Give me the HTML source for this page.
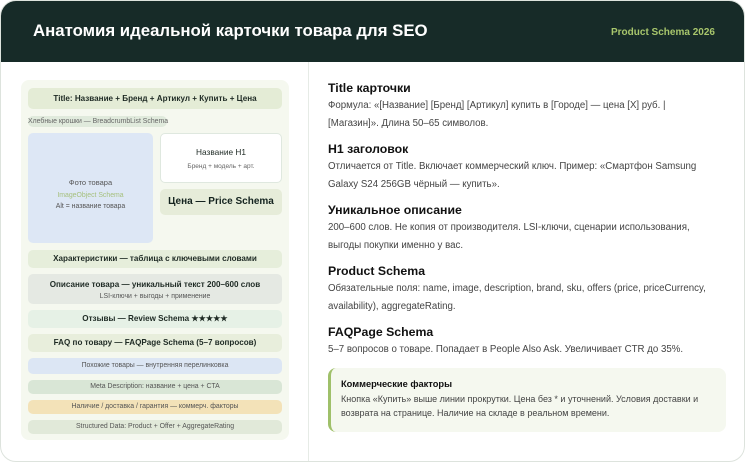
<!DOCTYPE html>
<html><head><meta charset="utf-8"><style>
*{margin:0;padding:0;box-sizing:border-box}
body{width:745px;height:462px;background:#fff;font-family:"Liberation Sans",Arial,sans-serif;position:relative;overflow:hidden}
.card{position:absolute;left:0;top:0;width:745px;height:462px;border:1px solid #dde3dd;border-radius:16px;overflow:hidden;background:#fff}
.hd{position:absolute;left:0;top:0;width:745px;height:61px;background:#172b28}
.hd h1{position:absolute;left:32px;top:20px;font-size:16.8px;color:#fff;font-weight:bold;white-space:nowrap}
.hd span{position:absolute;left:610px;top:26px;font-size:10px;color:#a8c66c;font-weight:bold}
.div{position:absolute;left:307px;top:61px;width:1px;height:401px;background:#e6ebe6}
.panel{position:absolute;left:20px;top:79px;width:268px;height:360px;background:#f5f8ef;border-radius:8px}
.b{position:absolute;left:27px;width:254px;border-radius:5px;text-align:center;white-space:nowrap;color:#1e2a24}
.bold{font-weight:bold;font-size:8.1px}
.sm{font-size:6.9px;color:#555}
.r{position:absolute;left:327px;white-space:nowrap}
.r h3{font-size:12.3px;font-weight:bold;color:#111;height:18px;line-height:18px}
.r p{font-size:9.7px;color:#444;line-height:18px}
.box{position:absolute;left:327px;top:367px;width:398px;height:64px;background:#f5f8ef;border-left:3px solid #9fc06a;border-radius:8px;padding:10px 0 0 10px}
.box h4{font-size:9.3px;color:#111;font-weight:bold;line-height:12px}
.box p{font-size:9px;color:#444;line-height:14px;margin-top:2px}
</style></head><body>
<div class="card">
<div class="hd"><h1>Анатомия идеальной карточки товара для SEO</h1><span>Product Schema 2026</span></div>
<div class="div"></div>
<div class="panel"></div>
<div class="b bold" style="top:87px;height:21px;line-height:21px;background:#e4ecd6">Title: Название + Бренд + Артикул + Купить + Цена</div>
<div class="b sm" style="left:27px;width:139px;top:115px;height:11px;line-height:11px;background:#e0eadc;text-align:left;color:#666">Хлебные крошки — BreadcrumbList Schema</div>
<div class="b" style="top:132px;width:125px;height:110px;background:#dde7f5;padding-top:45px">
<div style="font-size:7.5px;color:#555">Фото товара</div>
<div style="font-size:6.9px;color:#a6c07e;margin-top:5px">ImageObject Schema</div>
<div style="font-size:6.9px;color:#555;margin-top:4px">Alt = название товара</div></div>
<div class="b" style="left:159px;width:122px;top:132px;height:50px;background:#fff;border:1px solid #dfe8df;padding-top:13px">
<div style="font-size:8.3px;color:#1e2a24">Название H1</div>
<div style="font-size:6.5px;color:#666;margin-top:6px">Бренд + модель + арт.</div></div>
<div class="b" style="left:159px;width:122px;top:188px;height:26px;line-height:26px;background:#e6ecd9;font-size:10px;font-weight:bold;color:#14231f">Цена — Price Schema</div>
<div class="b bold" style="top:249px;height:18px;line-height:18px;background:#e6eedb">Характеристики — таблица с ключевыми словами</div>
<div class="b" style="top:273px;height:30px;background:#e5e9e3;padding-top:6px">
<div class="bold">Описание товара — уникальный текст 200–600 слов</div>
<div class="sm" style="margin-top:4px">LSI-ключи + выгоды + применение</div></div>
<div class="b bold" style="top:309px;height:18px;line-height:18px;background:#e6f1e6">Отзывы — Review Schema ★★★★★</div>
<div class="b bold" style="top:333px;height:18px;line-height:18px;background:#e8eedc">FAQ по товару — FAQPage Schema (5–7 вопросов)</div>
<div class="b sm" style="top:357px;height:16px;line-height:16px;background:#dce6f4">Похожие товары — внутренняя перелинковка</div>
<div class="b sm" style="top:379px;height:14px;line-height:14px;background:#d9e6d6">Meta Description: название + цена + CTA</div>
<div class="b sm" style="top:399px;height:14px;line-height:14px;background:#f3e2b8">Наличие / доставка / гарантия — коммерч. факторы</div>
<div class="b sm" style="top:419px;height:14px;line-height:14px;background:#e1e9d9">Structured Data: Product + Offer + AggregateRating</div>

<div class="r" style="top:78px"><h3>Title карточки</h3><p>Формула: «[Название] [Бренд] [Артикул] купить в [Городе] — цена [X] руб. |</p><p>[Магазин]». Длина 50–65 символов.</p></div>
<div class="r" style="top:139px"><h3>H1 заголовок</h3><p>Отличается от Title. Включает коммерческий ключ. Пример: «Смартфон Samsung</p><p>Galaxy S24 256GB чёрный — купить».</p></div>
<div class="r" style="top:200px"><h3>Уникальное описание</h3><p>200–600 слов. Не копия от производителя. LSI-ключи, сценарии использования,</p><p>выгоды покупки именно у вас.</p></div>
<div class="r" style="top:261px"><h3>Product Schema</h3><p>Обязательные поля: name, image, description, brand, sku, offers (price, priceCurrency,</p><p>availability), aggregateRating.</p></div>
<div class="r" style="top:322px"><h3>FAQPage Schema</h3><p>5–7 вопросов о товаре. Попадает в People Also Ask. Увеличивает CTR до 35%.</p></div>
<div class="box"><h4>Коммерческие факторы</h4><p>Кнопка «Купить» выше линии прокрутки. Цена без * и уточнений. Условия доставки и<br>возврата на странице. Наличие на складе в реальном времени.</p></div>
</div>
</body></html>
